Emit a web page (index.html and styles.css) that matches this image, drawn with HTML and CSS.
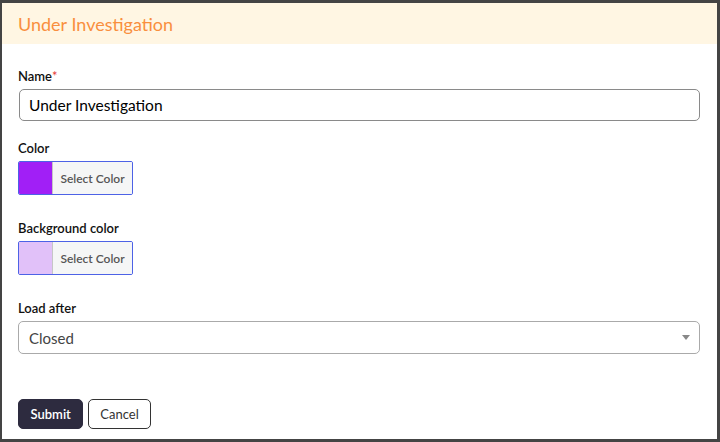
FILE: index.html
```html
<!DOCTYPE html>
<html lang="en">
<head>
    <meta charset="UTF-8">
    <meta name="viewport" content="width=device-width, initial-scale=1.0">
    <title>Edit Status</title>
    <link rel="stylesheet" href="styles.css">
</head>
<body>
    <div class="modal">
        <header class="modal-header">
            <h1>Under Investigation</h1>
        </header>
        <form class="modal-body">
            <div class="field">
                <label for="name">Name<span class="required">*</span></label>
                <input type="text" id="name" class="input" value="Under Investigation">
            </div>

            <div class="field field-color">
                <label>Color</label>
                <div class="color-picker">
                    <span class="swatch swatch-color"></span>
                    <span class="picker-text">Select Color</span>
                </div>
            </div>

            <div class="field field-color">
                <label>Background color</label>
                <div class="color-picker">
                    <span class="swatch swatch-bg"></span>
                    <span class="picker-text">Select Color</span>
                </div>
            </div>

            <div class="field">
                <label for="load-after">Load after</label>
                <div class="select">
                    <span>Closed</span>
                    <span class="caret"></span>
                </div>
            </div>

            <div class="actions">
                <button type="button" class="button button-primary">Submit</button>
                <button type="button" class="button button-outline">Cancel</button>
            </div>
        </form>
    </div>
</body>
</html>
```

FILE: styles.css
```css
body {
    margin: 0;
    padding: 0;
    font-family: Lato, "Open Sans", sans-serif;
    color: #111;
    background: #444;
}
.modal {
    width: 715px;
    height: 436px;
    margin: 3px 3px 0 2px;
    background: #fff;
    display: flex;
    flex-direction: column;
}
.modal-header {
    background: #fff6e3;
    height: 41px;
    display: flex;
    align-items: center;
    padding: 0 16px;
}
.modal-header h1 {
    margin: 0;
    font-size: 18px;
    font-weight: 400;
    color: #f98f3e;
}
.modal-body {
    flex: 1;
    padding: 23px 17px 0 16px;
}
.field {
    margin-bottom: 18px;
}
.field-color {
    margin-bottom: 24px;
}
.field label {
    display: block;
    font-size: 13px;
    font-weight: 600;
    line-height: 18px;
    margin-bottom: 4px;
}
.required {
    color: #e53935;
    font-weight: 400;
}
.input {
    box-sizing: border-box;
    width: 681px;
    height: 32px;
    margin-left: 1px;
    padding: 0 9px;
    border: 1px solid #8a8a8a;
    border-radius: 5px;
    font-family: inherit;
    font-size: 15.5px;
    color: #000;
}
.color-picker {
    box-sizing: border-box;
    width: 115px;
    height: 34px;
    display: flex;
    border: 1px solid #4d62e6;
    border-radius: 2px;
    overflow: hidden;
}
.swatch {
    width: 33px;
    border-right: 1px solid #c6c6c6;
}
.swatch-color {
    background: #a11ff6;
}
.swatch-bg {
    background: #e1c1f9;
}
.picker-text {
    flex: 1;
    display: flex;
    align-items: center;
    justify-content: center;
    background: #f5f6f6;
    font-size: 12px;
    font-weight: 600;
    color: #555;
}
.select {
    box-sizing: border-box;
    width: 682px;
    height: 33px;
    display: flex;
    align-items: center;
    justify-content: space-between;
    padding: 0 9px 0 10px;
    border: 1px solid #aaa;
    border-radius: 5px;
    font-size: 15px;
    color: #444;
}
.caret {
    width: 0;
    height: 0;
    border-left: 4px solid transparent;
    border-right: 4px solid transparent;
    border-top: 5px solid #888;
}
.actions {
    display: flex;
    gap: 5px;
    margin-top: 45px;
}
.button {
    height: 30px;
    padding: 0 11px;
    border-radius: 5px;
    font-family: inherit;
    font-size: 13px;
    cursor: pointer;
}
.button-primary {
    padding: 0 11.5px;
    background: #2d2b3f;
    border: 1px solid #2d2b3f;
    color: #fff;
    font-weight: 600;
}
.button-outline {
    background: #fff;
    border: 1px solid #333;
    color: #333;
}
```
